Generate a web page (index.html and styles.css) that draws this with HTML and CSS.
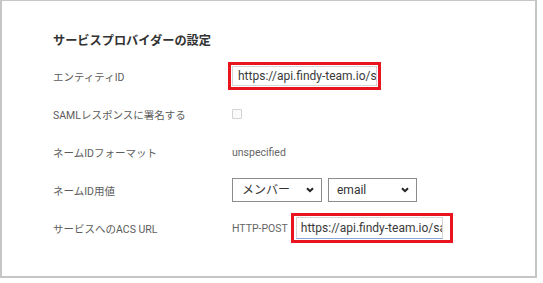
FILE: index.html
```html
<!DOCTYPE html>
<html lang="ja">
<head>
    <meta charset="UTF-8">
    <meta name="viewport" content="width=device-width, initial-scale=1.0">
    <title>サービスプロバイダーの設定</title>
    <link rel="stylesheet" href="styles.css">
</head>
<body>

    <div class="panel">
        <h2>サービスプロバイダーの設定</h2>

        <!-- Entity ID -->
        <div class="form-row">
            <label class="form-label" for="entity_id">エンティティID</label>
            <div class="highlight">
                <input type="text" id="entity_id" class="text-input" value="https://api.findy-team.io/saml/metadata" readonly>
            </div>
        </div>

        <!-- Signed response -->
        <div class="form-row">
            <label class="form-label" for="signed">SAMLレスポンスに署名する</label>
            <input type="checkbox" id="signed" class="checkbox" disabled>
        </div>

        <!-- Name ID format -->
        <div class="form-row">
            <span class="form-label">ネームIDフォーマット</span>
            <span class="plain-value">unspecified</span>
        </div>

        <!-- Name ID value -->
        <div class="form-row">
            <label class="form-label" for="name_src">ネームID用値</label>
            <div class="select-wrap wide">
                <select id="name_src" class="select">
                    <option>メンバー</option>
                </select>
                <svg class="chevron" width="8" height="6" viewBox="0 0 8 6"><path d="M1 1.2 L4 4.2 L7 1.2" fill="none" stroke="#222" stroke-width="2"/></svg>
            </div>
            <div class="select-wrap">
                <select id="name_attr" class="select">
                    <option>email</option>
                </select>
                <svg class="chevron" width="8" height="6" viewBox="0 0 8 6"><path d="M1 1.2 L4 4.2 L7 1.2" fill="none" stroke="#222" stroke-width="2"/></svg>
            </div>
        </div>

        <!-- ACS URL -->
        <div class="form-row">
            <label class="form-label" for="acs_url">サービスへのACS URL</label>
            <span class="plain-value binding">HTTP-POST</span>
            <div class="highlight acs">
                <input type="text" id="acs_url" class="text-input focused" value="https://api.findy-team.io/saml/acs" readonly autofocus>
            </div>
        </div>
    </div>

</body>
</html>
```

FILE: styles.css
```css
body {
  margin: 0;
  background-color: #ffffff;
  font-family: Roboto, "Noto Sans CJK JP", sans-serif;
}
.panel {
  box-sizing: border-box;
  width: 537px;
  height: 278px;
  border: 2px solid #c6c6c6;
  border-top-width: 1px;
  padding: 32px 0 0 51px;
}
h2 {
  margin: 0 0 8px 0;
  font-size: 12.2px;
  line-height: 16px;
  font-weight: bold;
  color: #333;
}
.form-row {
  display: flex;
  align-items: center;
  height: 38px;
}
.form-label {
  width: 179px;
  flex-shrink: 0;
  font-size: 10.5px;
  color: #5c5c5c;
}
.plain-value {
  font-size: 10.5px;
  color: #666;
}
.highlight {
  display: flex;
  border: 3px solid #e8141e;
  padding: 1px;
  margin-left: -4px;
}
.text-input {
  box-sizing: border-box;
  width: 145px;
  height: 20px;
  border: 1px solid #d6d6d6;
  padding: 0 0 0 5px;
  font-family: Roboto, sans-serif;
  font-size: 12px;
  color: #3a3a3a;
  background-color: #fff;
  outline: none;
}
.highlight.acs {
  margin-left: 3px;
  padding: 1px 7px 1px 2px;
}
.highlight.acs .text-input {
  width: 147px;
  height: 22px;
  padding-left: 4px;
}
.text-input.focused {
  border-bottom-color: #8aa6d6;
}
.checkbox {
  appearance: none;
  margin: 0;
  width: 10px;
  height: 10px;
  border: 1px solid #d2d2d2;
  border-radius: 1px;
  background-color: #fafafa;
}
.select-wrap {
  position: relative;
  margin-right: 6px;
}
.select {
  appearance: none;
  box-sizing: border-box;
  width: 89px;
  height: 24px;
  border: 1px solid #8c8c8c;
  border-radius: 0;
  background-color: #fff;
  padding: 0 0 0 8px;
  font-family: Roboto, "Noto Sans CJK JP", sans-serif;
  font-size: 12px;
  color: #333;
}
.select-wrap.wide .select {
  width: 90px;
  padding-left: 9px;
}
.chevron {
  position: absolute;
  right: 8px;
  top: 9px;
  pointer-events: none;
}
```
